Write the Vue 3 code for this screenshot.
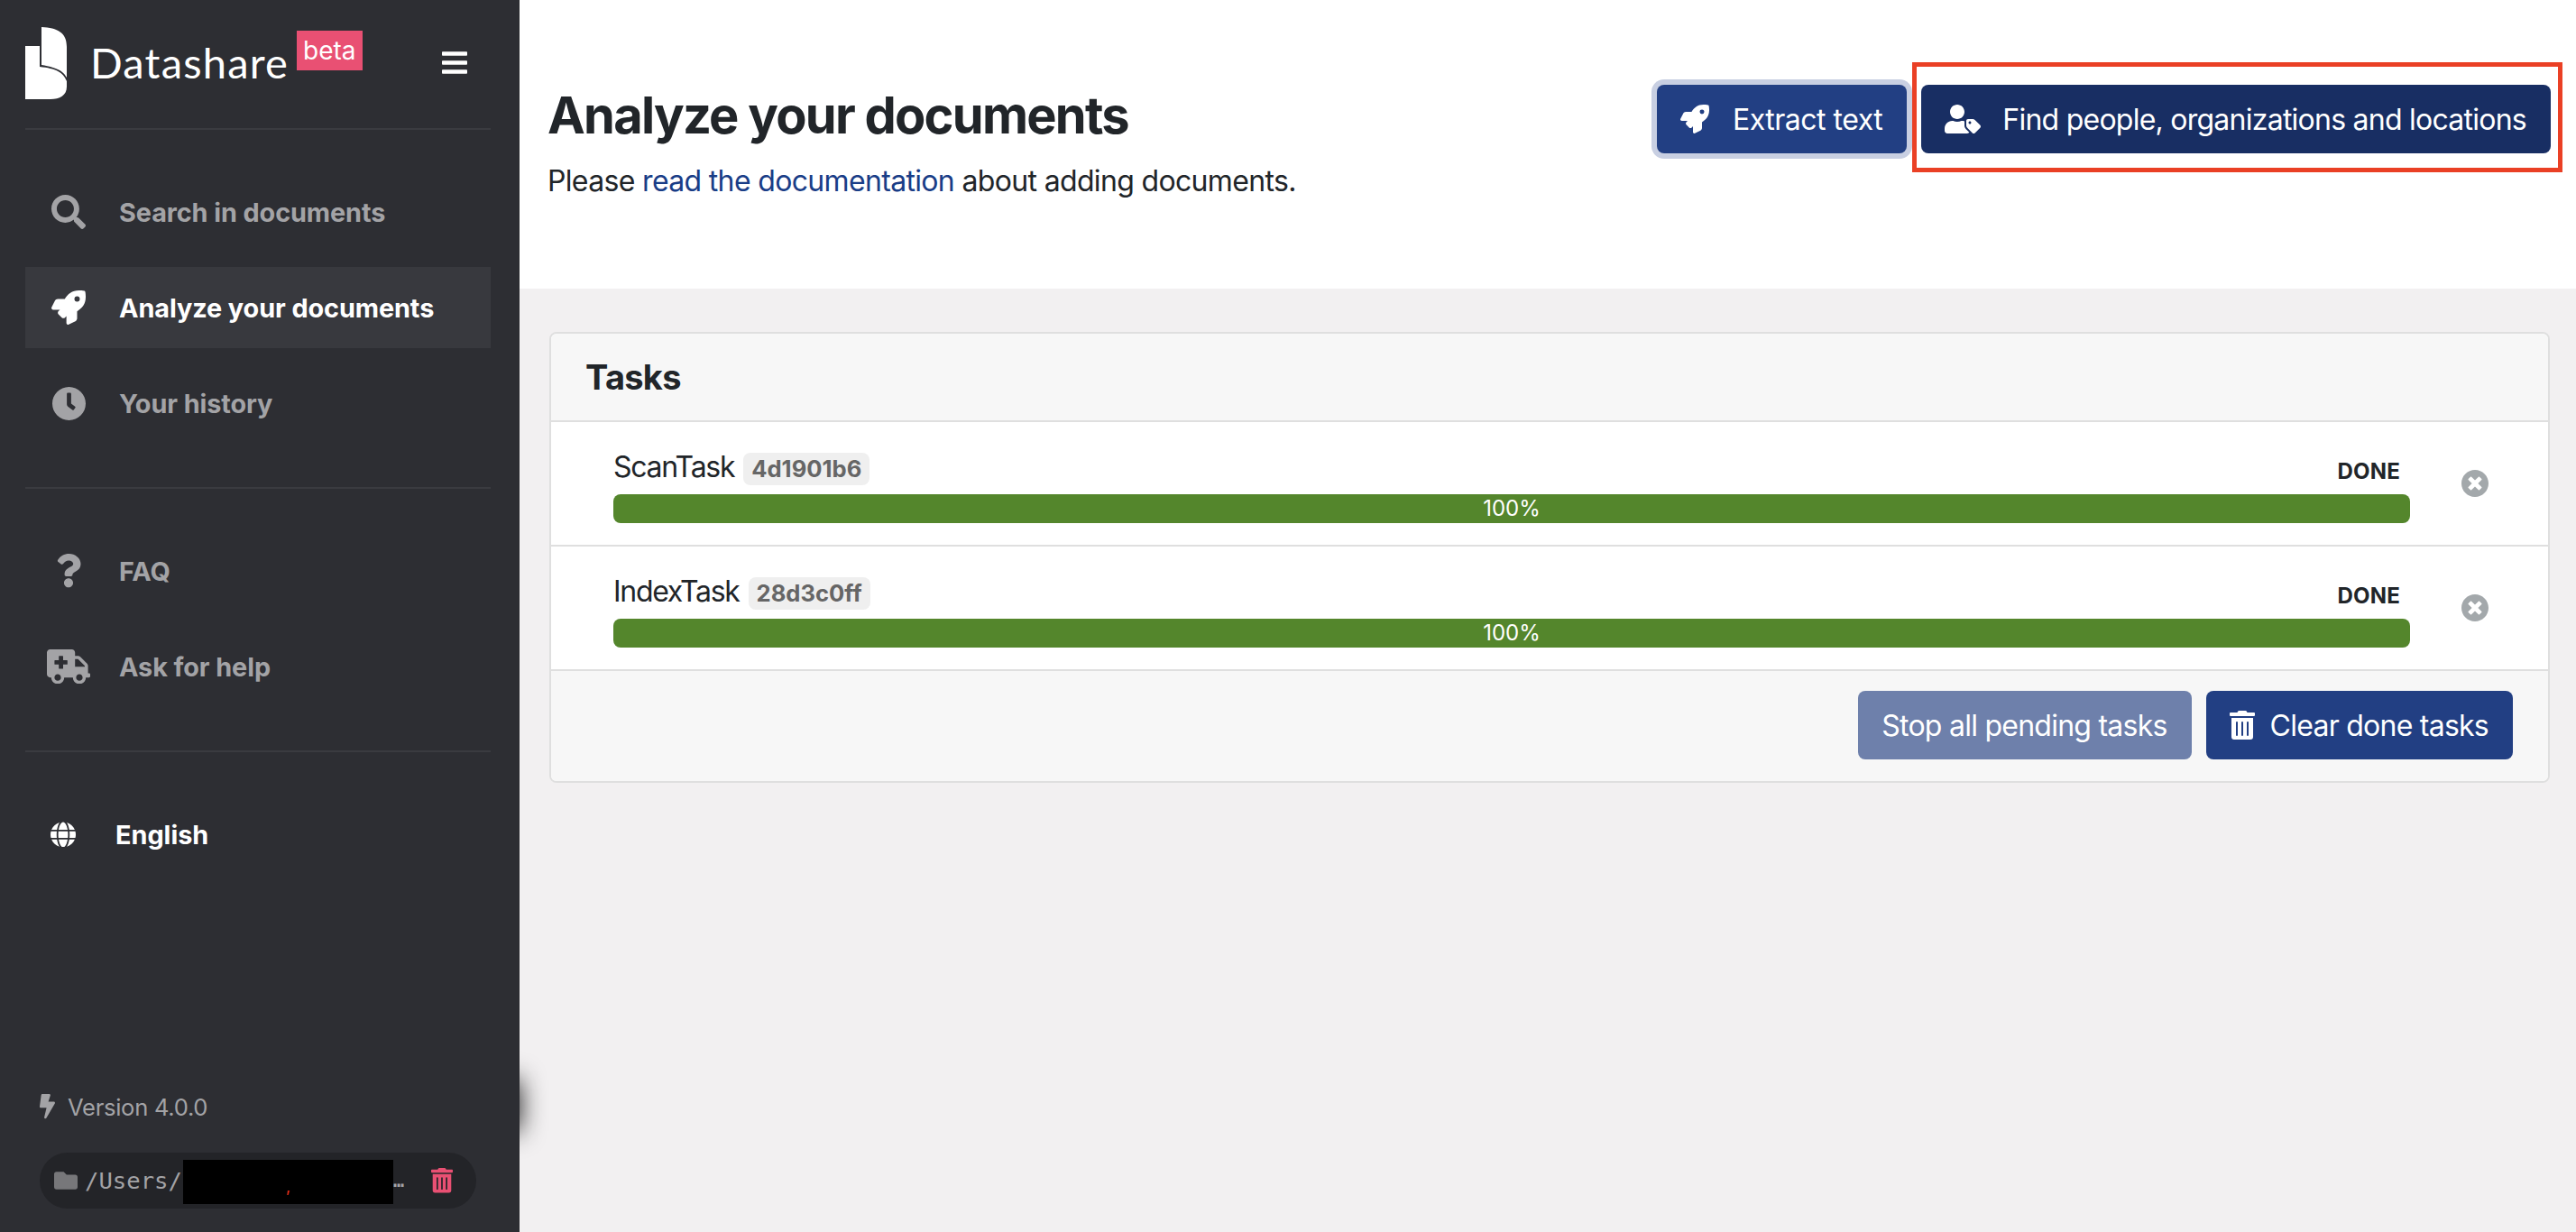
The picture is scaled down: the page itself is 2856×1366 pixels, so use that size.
<template>
  <div class="page">
    <aside class="sidebar">
      <div class="brand">
        <svg class="logo" viewBox="0 0 46 80">
          <path d="M18 0C36 1 46 6 46 22V56C42 49 36 45 18 42Z" />
          <path d="M0 21H16V44C34 46 42 50 46 60V66C46 76 38 80 28 80H0Z" />
        </svg>
        <span class="brand-name">Datashare</span>
        <span class="beta">beta</span>
        <svg class="burger" viewBox="0 60 448 392"><path :d="icons.bars" /></svg>
      </div>

      <nav class="nav-group">
        <a
          v-for="item in mainNav"
          :key="item.label"
          class="nav-item"
          :class="{ active: item.active }"
        >
          <span class="nav-icon">
            <svg :style="{ width: item.size + 'px' }" :viewBox="item.box"><path :d="icons[item.icon]" /></svg>
          </span>
          {{ item.label }}
        </a>
      </nav>

      <nav class="nav-group bordered">
        <a v-for="item in helpNav" :key="item.label" class="nav-item">
          <span class="nav-icon">
            <svg :style="{ width: item.size + 'px' }" :viewBox="item.box"><path :d="icons[item.icon]" /></svg>
          </span>
          {{ item.label }}
        </a>
      </nav>

      <div class="language">
        <svg viewBox="0 0 496 512"><path :d="icons.globe" /></svg>
        <span>English</span>
      </div>

      <div class="side-footer">
        <div class="version">
          <svg viewBox="0 0 320 512"><path :d="icons.bolt" /></svg>
          <span>Version 4.0.0</span>
        </div>
        <div class="path-chip">
          <svg class="folder" viewBox="0 0 512 512"><path :d="icons.folder" /></svg>
          <span class="path-text">/Users/</span>
          <span class="redacted"><i>,</i></span>
          <span class="dots">…</span>
          <svg class="chip-trash" viewBox="0 0 448 512"><path :d="icons.trash" /></svg>
        </div>
      </div>
    </aside>
    <div class="edge-shadow"></div>

    <main class="main">
      <header class="top">
        <div class="intro">
          <h1>Analyze your documents</h1>
          <p>Please <a>read the documentation</a> about adding documents.</p>
        </div>
        <div class="actions">
          <button class="btn focused">
            <svg class="ic-rocket" viewBox="0 0 512 512"><path :d="icons.rocket" /></svg>
            <span class="extract-label">Extract text</span>
          </button>
          <div class="highlight-wrap">
            <button class="btn dark">
              <svg class="ic-usertag" viewBox="0 0 640 512"><path :d="icons.userTag" /></svg>
              <span>Find people, organizations and locations</span>
            </button>
            <span class="red-box"></span>
          </div>
        </div>
      </header>

      <section class="content">
        <div class="card">
          <div class="card-head">Tasks</div>
          <div v-for="task in tasks" :key="task.id" class="task">
            <div class="task-body">
              <div class="task-top">
                <div class="task-name">
                  <span class="task-label">{{ task.name }}</span>
                  <code class="task-id">{{ task.id }}</code>
                </div>
                <span class="task-state">DONE</span>
              </div>
              <div class="progress"><span>100%</span></div>
            </div>
            <svg class="task-close" viewBox="8 8 496 496"><path :d="icons.times" /></svg>
          </div>
          <div class="card-foot">
            <button class="btn faded"><span>Stop all pending tasks</span></button>
            <button class="btn">
              <svg class="ic-trash" viewBox="0 0 448 512"><path :d="icons.trash" /></svg>
              <span>Clear done tasks</span>
            </button>
          </div>
        </div>
      </section>
    </main>
  </div>
</template>

<script setup>
const icons = {
  bars: 'M16 132h416c8.837 0 16-7.163 16-16V76c0-8.837-7.163-16-16-16H16C7.163 60 0 67.163 0 76v40c0 8.837 7.163 16 16 16zm0 160h416c8.837 0 16-7.163 16-16v-40c0-8.837-7.163-16-16-16H16c-8.837 0-16 7.163-16 16v40c0 8.837 7.163 16 16 16zm0 160h416c8.837 0 16-7.163 16-16v-40c0-8.837-7.163-16-16-16H16c-8.837 0-16 7.163-16 16v40c0 8.837 7.163 16 16 16z',
  search: 'M505 442.7L405.3 343c-4.5-4.5-10.6-7-17-7H372c27.6-35.3 44-79.7 44-128C416 93.1 322.9 0 208 0S0 93.1 0 208s93.1 208 208 208c48.3 0 92.7-16.4 128-44v16.3c0 6.4 2.5 12.5 7 17l99.7 99.7c9.4 9.4 24.6 9.4 33.9 0l28.3-28.3c9.4-9.4 9.4-24.6.1-34zM208 336c-70.7 0-128-57.2-128-128 0-70.7 57.2-128 128-128 70.7 0 128 57.2 128 128 0 70.7-57.2 128-128 128z',
  rocket: 'M505.12019,19.09375c-1.18945-5.53125-6.65819-11-12.207-12.1875C460.716,0,435.507,0,410.40747,0,307.17523,0,245.26909,55.20312,199.05238,128H94.83772c-16.34763.01562-35.55658,11.875-42.88664,26.48438L2.51562,253.29688A28.4,28.4,0,0,0,0,264a24.00867,24.00867,0,0,0,24.00582,24H127.81618l-22.47457,22.46875c-11.36521,11.36133-12.99607,32.25781,0,45.25L156.24582,406.625c11.15623,11.1875,32.15619,13.15625,45.27726,0l22.47457-22.46875V488a24.00867,24.00867,0,0,0,24.00581,24,28.55934,28.55934,0,0,0,10.707-2.51562l98.72834-49.39063c14.62888-7.29687,26.50776-26.5,26.50776-42.85937V312.79688c72.59753-46.3125,128.03493-108.40626,128.03493-211.09376C512.07526,76.5,512.07526,51.29688,505.12019,19.09375ZM384.04033,168A40,40,0,1,1,424.05,128,40.02322,40.02322,0,0,1,384.04033,168Z',
  clock: 'M256,8C119,8,8,119,8,256S119,504,256,504,504,393,504,256,393,8,256,8Zm92.49,313h0l-20,25a16,16,0,0,1-22.49,2.5h0l-67-49.72a40,40,0,0,1-15-31.23V112a16,16,0,0,1,16-16h32a16,16,0,0,1,16,16V256l58,42.5A16,16,0,0,1,348.49,321Z',
  question: 'M202.021 0C122.202 0 70.503 32.703 29.914 91.026c-7.363 10.58-5.093 25.086 5.178 32.874l43.138 32.709c10.373 7.865 25.132 6.026 33.253-4.148 25.049-31.381 43.63-49.449 82.757-49.449 30.764 0 68.816 19.799 68.816 49.631 0 22.552-18.617 34.134-48.993 51.164-35.423 19.86-82.299 44.576-82.299 106.405V320c0 13.255 10.745 24 24 24h72.471c13.255 0 24-10.745 24-24v-5.773c0-42.86 125.268-44.645 125.268-160.627C377.504 66.256 286.902 0 202.021 0zM192 373.459c-38.196 0-69.271 31.075-69.271 69.271 0 38.195 31.075 69.27 69.271 69.27s69.271-31.075 69.271-69.271-31.075-69.27-69.271-69.27z',
  ambulance: 'M624 352h-16V243.9c0-12.7-5.1-24.9-14.1-33.9L494 110.1c-9-9-21.2-14.1-33.9-14.1H416V48c0-26.5-21.5-48-48-48H48C21.5 0 0 21.5 0 48v320c0 26.5 21.5 48 48 48h16c0 53 43 96 96 96s96-43 96-96h128c0 53 43 96 96 96s96-43 96-96h48c8.8 0 16-7.2 16-16v-32c0-8.8-7.2-16-16-16zM160 464c-26.5 0-48-21.5-48-48s21.5-48 48-48 48 21.5 48 48-21.5 48-48 48zm144-248c0 4.4-3.6 8-8 8h-56v56c0 4.4-3.6 8-8 8h-48c-4.4 0-8-3.6-8-8v-56h-56c-4.4 0-8-3.6-8-8v-48c0-4.4 3.6-8 8-8h56v-56c0-4.4 3.6-8 8-8h48c4.4 0 8 3.6 8 8v56h56c4.4 0 8 3.6 8 8v48zm176 248c-26.5 0-48-21.5-48-48s21.5-48 48-48 48 21.5 48 48-21.5 48-48 48zm80-208H416V144h44.1l99.9 99.9V256z',
  globe: 'M336.5 160C322 70.7 287.8 8 248 8s-74 62.7-88.5 152h177zM152 256c0 22.2 1.2 43.5 3.3 64h185.3c2.1-20.5 3.3-41.8 3.3-64s-1.2-43.5-3.3-64H155.3c-2.1 20.5-3.3 41.8-3.3 64zm324.7-96c-28.6-67.9-86.5-120.4-158-141.6 24.4 33.8 41.2 84.7 50 141.6h108zM177.2 18.4C105.8 39.6 47.8 92.1 19.3 160h108c8.7-56.9 25.5-107.8 49.9-141.6zM487.4 192H372.7c2.1 21 3.3 42.5 3.3 64s-1.2 43-3.3 64h114.6c5.5-20.5 8.6-41.8 8.6-64s-3.1-43.5-8.5-64zM120 256c0-21.5 1.2-43 3.3-64H8.6C3.2 212.5 0 233.8 0 256s3.2 43.5 8.6 64h114.6c-2-21-3.2-42.5-3.2-64zm39.5 96c14.5 89.3 48.7 152 88.5 152s74-62.7 88.5-152h-177zm159.3 141.6c71.4-21.2 129.4-73.7 158-141.6h-108c-8.8 56.9-25.6 107.8-50 141.6zM19.3 352c28.6 67.9 86.5 120.4 158 141.6-24.4-33.8-41.2-84.7-50-141.6h-108z',
  bolt: 'M296 160H180.6l42.6-129.8C227.2 15 215.7 0 200 0H56C44 0 33.8 8.9 32.2 20.8l-32 240C-1.7 275.2 9.5 288 24 288h118.7L96.6 482.5c-3.6 15.2 8 29.5 23.3 29.5 8.4 0 16.4-4.4 20.8-12l176-304c9.3-15.9-2.2-36-20.7-36z',
  folder: 'M464 128H272l-64-64H48C21.49 64 0 85.49 0 112v288c0 26.51 21.49 48 48 48h416c26.51 0 48-21.49 48-48V176c0-26.51-21.49-48-48-48z',
  trash: 'M32 464a48 48 0 0 0 48 48h288a48 48 0 0 0 48-48V128H32zm272-256a16 16 0 0 1 32 0v224a16 16 0 0 1-32 0zm-96 0a16 16 0 0 1 32 0v224a16 16 0 0 1-32 0zm-96 0a16 16 0 0 1 32 0v224a16 16 0 0 1-32 0zM432 32H312l-9.4-18.7A24 24 0 0 0 281.1 0H166.8a23.72 23.72 0 0 0-21.4 13.3L136 32H16A16 16 0 0 0 0 48v32a16 16 0 0 0 16 16h416a16 16 0 0 0 16-16V48a16 16 0 0 0-16-16z',
  times: 'M256 8C119 8 8 119 8 256s111 248 248 248 248-111 248-248S393 8 256 8zm121.6 313.1c4.7 4.7 4.7 12.3 0 17L338 377.6c-4.7 4.7-12.3 4.7-17 0L256 312l-65.1 65.6c-4.7 4.7-12.3 4.7-17 0L134.4 338c-4.7-4.7-4.7-12.3 0-17l65.6-65-65.6-65.1c-4.7-4.7-4.7-12.3 0-17l39.6-39.6c4.7-4.7 12.3-4.7 17 0l65 65.7 65.1-65.6c4.7-4.7 12.3-4.7 17 0l39.6 39.6c4.7 4.7 4.7 12.3 0 17L312 256l65.6 65.1z',
  userTag: 'M630.6 364.9l-90.3-90.2c-12-12-28.3-18.7-45.3-18.7h-79.3c-17.7 0-32 14.3-32 32v79.2c0 17 6.7 33.2 18.7 45.2l90.3 90.2c12.5 12.5 32.8 12.5 45.3 0l92.5-92.5c12.6-12.5 12.6-32.7.1-45.2zm-182.8-21c-13.3 0-24-10.7-24-24s10.7-24 24-24 24 10.7 24 24c0 13.2-10.7 24-24 24zm-223.8-88c70.7 0 128-57.3 128-128C352 57.3 294.7 0 224 0S96 57.3 96 128c0 70.7 57.3 128 128 128zm127.8 111.2V294c-12.2-3.6-24.9-6.2-38.2-6.2h-16.7c-22.2 10.2-46.9 16-72.9 16s-50.6-5.8-72.9-16h-16.7C60.2 288 0 348.2 0 422.4V464c0 26.5 21.5 48 48 48h352c15.5 0 29.1-7.5 37.9-18.9l-58-58c-18.1-18.1-28.1-42.2-28.1-67.9z'
}

const mainNav = [
  { label: 'Search in documents', icon: 'search', box: '0 0 512 512', size: 38 },
  { label: 'Analyze your documents', icon: 'rocket', box: '0 0 512 512', size: 38, active: true },
  { label: 'Your history', icon: 'clock', box: '8 8 496 496', size: 37 }
]

const helpNav = [
  { label: 'FAQ', icon: 'question', box: '0 0 384 512', size: 28 },
  { label: 'Ask for help', icon: 'ambulance', box: '0 0 640 512', size: 48 }
]

const tasks = [
  { name: 'ScanTask', id: '4d1901b6' },
  { name: 'IndexTask', id: '28d3c0ff' }
]
</script>

<style>
html,
body {
  margin: 0;
  background: #f2f0f1;
}
</style>

<style scoped>
.page {
  position: relative;
  display: flex;
  width: 2856px;
  height: 1366px;
  overflow: hidden;
  font-family: Inter, "Liberation Sans", sans-serif;
  color: #212529;
}

svg {
  display: block;
  fill: currentColor;
  flex-shrink: 0;
}

/* sidebar */
.sidebar {
  position: relative;
  z-index: 2;
  display: flex;
  flex-direction: column;
  box-sizing: border-box;
  width: 576px;
  height: 1366px;
  padding: 0 32px 0 28px;
  background: #2d2e33;
  color: #a3a3a6;
}

.brand {
  display: flex;
  align-items: flex-start;
  height: 142px;
  color: #fff;
}

.logo {
  width: 46px;
  height: 80px;
  margin-top: 30px;
}

.brand-name {
  margin: 40px 0 0 26px;
  font-family: Lato, sans-serif;
  font-size: 47px;
  font-weight: 400;
  letter-spacing: 1.2px;
  line-height: 58px;
}

.beta {
  height: 44px;
  margin: 34px 0 0 9px;
  padding: 0 7px;
  background: #e95073;
  font-size: 28px;
  line-height: 44px;
}

.burger {
  width: 28px;
  height: 25px;
  margin: 57px 26px 0 auto;
}

.nav-group {
  padding: 46px 0 48px;
  border-top: 2px solid #3a3b40;
}

.nav-group.bordered {
  border-bottom: 2px solid #3a3b40;
}

.nav-item {
  display: flex;
  align-items: center;
  height: 90px;
  margin-bottom: 16px;
  padding-left: 16px;
  font-size: 28.8px;
  font-weight: 700;
  letter-spacing: -0.08px;
}

.nav-item:last-child {
  margin-bottom: 0;
}

.nav-item.active {
  background: #38393e;
  color: #fff;
}

.nav-icon {
  display: flex;
  justify-content: center;
  width: 64px;
  margin-right: 24px;
}

.language {
  display: flex;
  align-items: center;
  height: 60px;
  margin-top: 61px;
  padding-left: 28px;
  color: #fff;
  font-size: 28.8px;
  font-weight: 700;
}

.language svg {
  width: 28px;
  margin-right: 44px;
}

.side-footer {
  margin-top: auto;
  padding: 0 16px 26px;
}

.version {
  display: flex;
  align-items: center;
  height: 30px;
  margin-bottom: 36px;
  font-size: 25.6px;
  letter-spacing: -0.3px;
}

.version svg {
  width: 17px;
  margin-right: 14px;
}

.path-chip {
  display: flex;
  align-items: center;
  box-sizing: border-box;
  height: 62px;
  padding: 0 26px 0 16px;
  border-radius: 31px;
  background: #232428;
}

.folder {
  width: 26px;
  margin-right: 8px;
  color: #77777a;
}

.path-text {
  width: 109px;
  font-family: "DejaVu Sans Mono", monospace;
  font-size: 25.6px;
  color: #a3a3a6;
}

.redacted {
  display: flex;
  justify-content: center;
  width: 233px;
  height: 49px;
  margin-top: 2px;
  background: #000;
  color: #e8311c;
  font-size: 18px;
  line-height: 60px;
}

.redacted i {
  font-style: normal;
}

.dots {
  width: 12px;
  margin-right: 30px;
  font-family: "DejaVu Sans Mono", monospace;
  font-size: 20px;
  font-weight: 700;
  line-height: 1;
  color: #a3a3a6;
}

.chip-trash {
  width: 24px;
  color: #e95073;
}

.edge-shadow {
  position: absolute;
  left: 516px;
  top: 1197px;
  z-index: 1;
  width: 60px;
  height: 57px;
  box-shadow: 0 0 28px rgba(0, 0, 0, 0.9);
}

/* main */
.main {
  display: flex;
  flex-direction: column;
  flex: 1;
  min-width: 0;
}

.top {
  display: flex;
  justify-content: space-between;
  box-sizing: border-box;
  height: 320px;
  padding: 94px 28px 0 31px;
  background: #fff;
}

.intro {
  padding-top: 1px;
}

h1 {
  margin: 0 0 15px;
  font-size: 56px;
  font-weight: 700;
  letter-spacing: -1.75px;
  line-height: 67px;
}

.intro p {
  margin: 0;
  font-size: 32px;
  letter-spacing: -0.66px;
  line-height: 48px;
}

.intro a {
  color: #193d87;
}

.actions {
  display: flex;
  gap: 16px;
  align-items: flex-start;
}

.highlight-wrap {
  position: relative;
}

.red-box {
  position: absolute;
  left: -10px;
  right: -13px;
  top: -25px;
  bottom: -21px;
  border: 5px solid #ea4025;
}

.btn {
  display: inline-flex;
  align-items: center;
  box-sizing: border-box;
  height: 76px;
  padding: 2px 27px 0 26px;
  border: 0;
  border-radius: 8px;
  background: #223f83;
  color: #fff;
  font: 400 32px/48px Inter, "Liberation Sans", sans-serif;
  letter-spacing: -0.75px;
}

.btn svg {
  margin-top: -2px;
}

.extract-label {
  letter-spacing: -0.5px;
}

.btn.focused {
  box-shadow: 0 0 0 6px #c8cfe2;
}

.btn.dark {
  background: #182e63;
}

.btn.faded {
  background: #6e80ab;
}

.ic-rocket {
  width: 32px;
  margin-right: 26px;
}

.ic-usertag {
  width: 40px;
  margin-right: 24px;
}

.ic-trash {
  width: 28px;
  margin-right: 17px;
}

.content {
  padding: 48px 29px 0 33px;
}

.card {
  border: 2px solid #dfdfdf;
  border-radius: 8px;
  background: #fff;
}

.card-head {
  height: 96px;
  padding-left: 38px;
  border-bottom: 2px solid #dfdfdf;
  border-radius: 6px 6px 0 0;
  background: #f7f7f7;
  font-size: 38px;
  font-weight: 700;
  letter-spacing: -0.7px;
  line-height: 96px;
}

.task {
  display: flex;
  align-items: center;
  height: 136px;
  padding-left: 69px;
  border-bottom: 2px solid #dfdfdf;
}

.task-body {
  flex: 1;
  min-width: 0;
  padding-top: 10px;
}

.task-top {
  display: flex;
  align-items: center;
  justify-content: space-between;
  height: 36px;
  margin-bottom: 10px;
}

.task-name {
  display: flex;
  align-items: center;
  gap: 10px;
  font-size: 32px;
}

.task-label {
  margin-top: -5px;
  letter-spacing: -1.3px;
}

.task-id {
  padding: 0 9px;
  border-radius: 8px;
  background: #efefef;
  color: #666;
  font-family: Inter, "Liberation Sans", sans-serif;
  font-size: 25.6px;
  font-weight: 700;
  line-height: 36px;
}

.task-state {
  padding: 4px 11px 0 0;
  font-size: 24px;
  font-weight: 700;
  letter-spacing: 0.2px;
}

.progress {
  height: 32px;
  border-radius: 8px;
  background: #54862c;
  color: #fff;
  font-size: 24px;
  line-height: 32px;
  text-align: center;
}

.task-close {
  width: 30px;
  margin: 0 66px 0 57px;
  color: #a3a8ab;
}

.card-foot {
  display: flex;
  justify-content: flex-end;
  gap: 16px;
  box-sizing: border-box;
  height: 122px;
  padding: 22px 39px 0 0;
  border-radius: 0 0 6px 6px;
  background: #f7f7f7;
}
</style>
